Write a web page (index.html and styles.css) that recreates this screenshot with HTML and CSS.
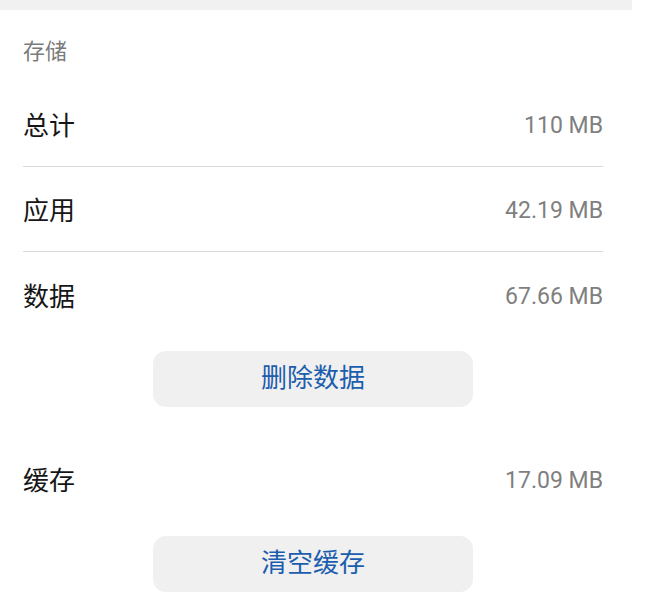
FILE: index.html
```html
<!DOCTYPE html>
<html lang="zh-CN">
<head>
<meta charset="utf-8">
<title>存储</title>
<link rel="stylesheet" href="styles.css">
</head>
<body>
<div class="topbar"></div>
<main class="storage">
  <div class="section-label">存储</div>
  <div class="row divided"><span class="name">总计</span><span class="value">110 MB</span></div>
  <div class="row divided"><span class="name">应用</span><span class="value">42.19 MB</span></div>
  <div class="row"><span class="name">数据</span><span class="value">67.66 MB</span></div>
  <div class="btn-wrap first"><button class="btn">删除数据</button></div>
  <div class="row"><span class="name">缓存</span><span class="value">17.09 MB</span></div>
  <div class="btn-wrap second"><button class="btn">清空缓存</button></div>
</main>
</body>
</html>
```

FILE: styles.css
```css
* { box-sizing: border-box; }
html, body { margin: 0; padding: 0; background: #ffffff; }
body {
  width: 666px;
  height: 594px;
  overflow: hidden;
  font-family: Roboto, "Noto Sans CJK SC", "Noto Sans", sans-serif;
}
.topbar {
  width: 632px;
  height: 10px;
  background: #f1f1f1;
}
.storage {
  width: 603px;
  padding-left: 23px;
}
.section-label {
  font-size: 22px;
  line-height: 30px;
  color: #7b7b7b;
  padding-top: 27px;
  padding-bottom: 15px;
}
.row {
  display: flex;
  justify-content: space-between;
  align-items: center;
  height: 85px;
  padding-top: 4px;
}
.row.divided {
  border-bottom: 1px solid #dadada;
}
.name {
  font-size: 26px;
  line-height: 30px;
  color: #161616;
}
.value {
  font-size: 23px;
  line-height: 30px;
  color: #7f7f7f;
}
.btn-wrap {
  display: flex;
  padding-left: 130px;
}
.btn-wrap.first { padding-top: 14px; padding-bottom: 29px; }
.btn-wrap.second { padding-top: 15px; }
.btn {
  width: 320px;
  height: 56px;
  border: none;
  border-radius: 13px;
  background: #f0f0f0;
  color: #1c5eae;
  font-family: Roboto, "Noto Sans CJK SC", sans-serif;
  font-size: 26px;
  font-weight: 400;
  line-height: 30px;
  padding: 0 0 3px 0;
}
```
